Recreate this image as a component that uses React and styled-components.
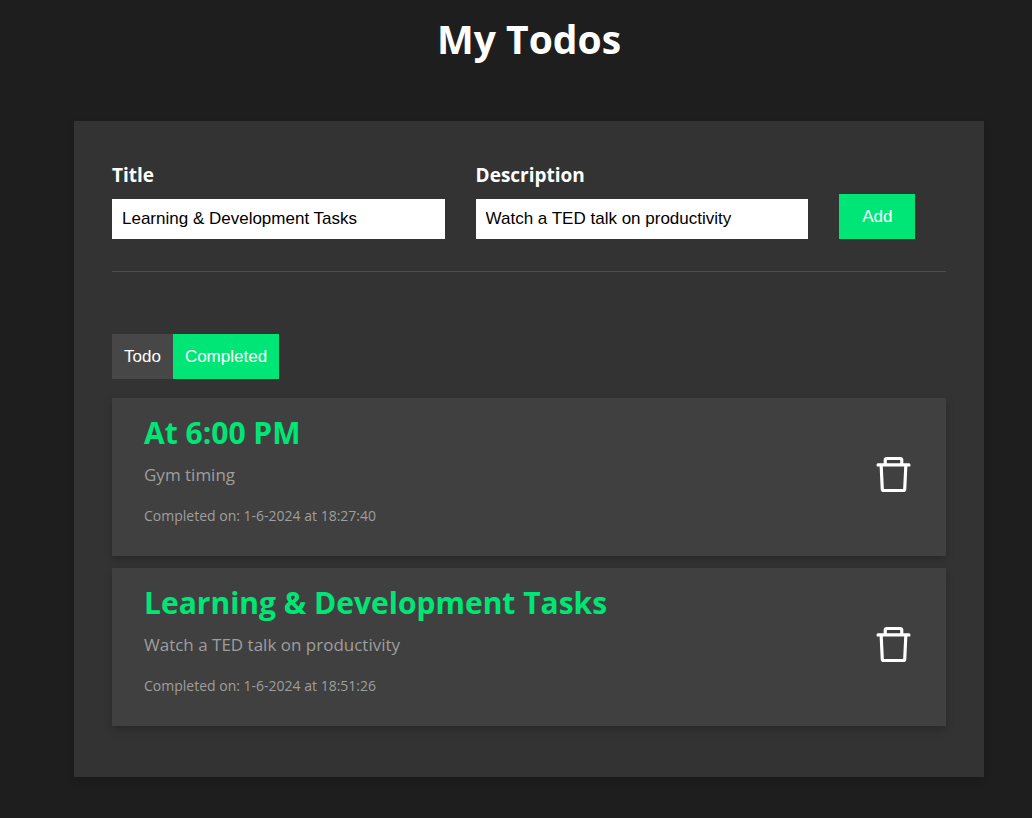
import React, { useState } from "react";
import styled, { createGlobalStyle } from "styled-components";
import { AiOutlineDelete } from "react-icons/ai";

const GlobalStyle = createGlobalStyle`
  * { box-sizing: border-box; margin: 0; padding: 0; }
  body {
    background: #1e1e1e;
    color: #fff;
    font-family: "Segoe UI", "Open Sans", sans-serif;
  }
`;

const Page = styled.div`
  padding: 11px 48px 41px 74px;
`;

const PageTitle = styled.h1`
  font-size: 39px;
  line-height: 56px;
  text-align: center;
  margin-bottom: 54px;
`;

const Panel = styled.main`
  background: #333;
  padding: 38px 38px 51px;
  box-shadow: 0 4px 8px rgba(0, 0, 0, 0.15);
`;

const Form = styled.form`
  display: flex;
  align-items: flex-end;
  gap: 31px;
  padding-bottom: 32px;
  border-bottom: 1px solid #4d4d4d;
  margin-bottom: 62px;
`;

const Field = styled.div`
  display: flex;
  flex-direction: column;
  flex: 0 0 calc(40% - 1px);
  min-width: 0;
`;

const Label = styled.label`
  font-size: 19px;
  line-height: 32px;
  font-weight: 700;
  margin-bottom: 8px;
`;

const Input = styled.input`
  width: 100%;
  height: 40px;
  padding: 0 10px;
  border: 0;
  background: #fff;
  color: #000;
  font: 17px "Liberation Sans", Arial, sans-serif;
`;

const Button = styled.button`
  height: 45px;
  padding: 0 ${(p) => (p.$wide ? 23 : 12)}px;
  border: 0;
  background: ${(p) => (p.$active ? "#00e676" : "#474747")};
  color: #fff;
  font: 17px "Liberation Sans", Arial, sans-serif;
  cursor: pointer;
`;

const Tabs = styled.div`
  display: flex;
  margin-bottom: 19px;
`;

const List = styled.ul`
  display: flex;
  flex-direction: column;
  gap: 12px;
  list-style: none;
`;

const Card = styled.li`
  display: flex;
  align-items: center;
  justify-content: space-between;
  background: #404040;
  padding: 14px 30px 20px 32px;
  box-shadow: 0 4px 8px rgba(0, 0, 0, 0.2);
`;

const CardTitle = styled.h3`
  color: #00e676;
  font-size: 30px;
  line-height: 42px;
`;

const CardText = styled.p`
  color: #9e9e9e;
  font-size: 17px;
  line-height: 42px;
`;

const CardDate = styled.p`
  color: #9e9e9e;
  font-size: 14px;
  line-height: 40px;
`;

const IconButton = styled.button`
  display: flex;
  border: 0;
  background: none;
  color: #fff;
  font-size: 45px;
  cursor: pointer;
`;

const todos = [
  { title: "At 6:00 PM", text: "Gym timing", date: "1-6-2024 at 18:27:40" },
  {
    title: "Learning & Development Tasks",
    text: "Watch a TED talk on productivity",
    date: "1-6-2024 at 18:51:26",
  },
];

export default function App() {
  const [title, setTitle] = useState("Learning & Development Tasks");
  const [description, setDescription] = useState("Watch a TED talk on productivity");

  return (
    <>
      <GlobalStyle />
      <Page>
        <PageTitle>My Todos</PageTitle>
        <Panel>
          <Form onSubmit={(e) => e.preventDefault()}>
            <Field>
              <Label htmlFor="title">Title</Label>
              <Input id="title" value={title} onChange={(e) => setTitle(e.target.value)} />
            </Field>
            <Field>
              <Label htmlFor="description">Description</Label>
              <Input
                id="description"
                value={description}
                onChange={(e) => setDescription(e.target.value)}
              />
            </Field>
            <Button type="submit" $active $wide>Add</Button>
          </Form>
          <Tabs>
            <Button type="button">Todo</Button>
            <Button type="button" $active>Completed</Button>
          </Tabs>
          <List>
            {todos.map((todo) => (
              <Card key={todo.date}>
                <div>
                  <CardTitle>{todo.title}</CardTitle>
                  <CardText>{todo.text}</CardText>
                  <CardDate>Completed on: {todo.date}</CardDate>
                </div>
                <IconButton type="button" aria-label="Delete">
                  <AiOutlineDelete />
                </IconButton>
              </Card>
            ))}
          </List>
        </Panel>
      </Page>
    </>
  );
}
